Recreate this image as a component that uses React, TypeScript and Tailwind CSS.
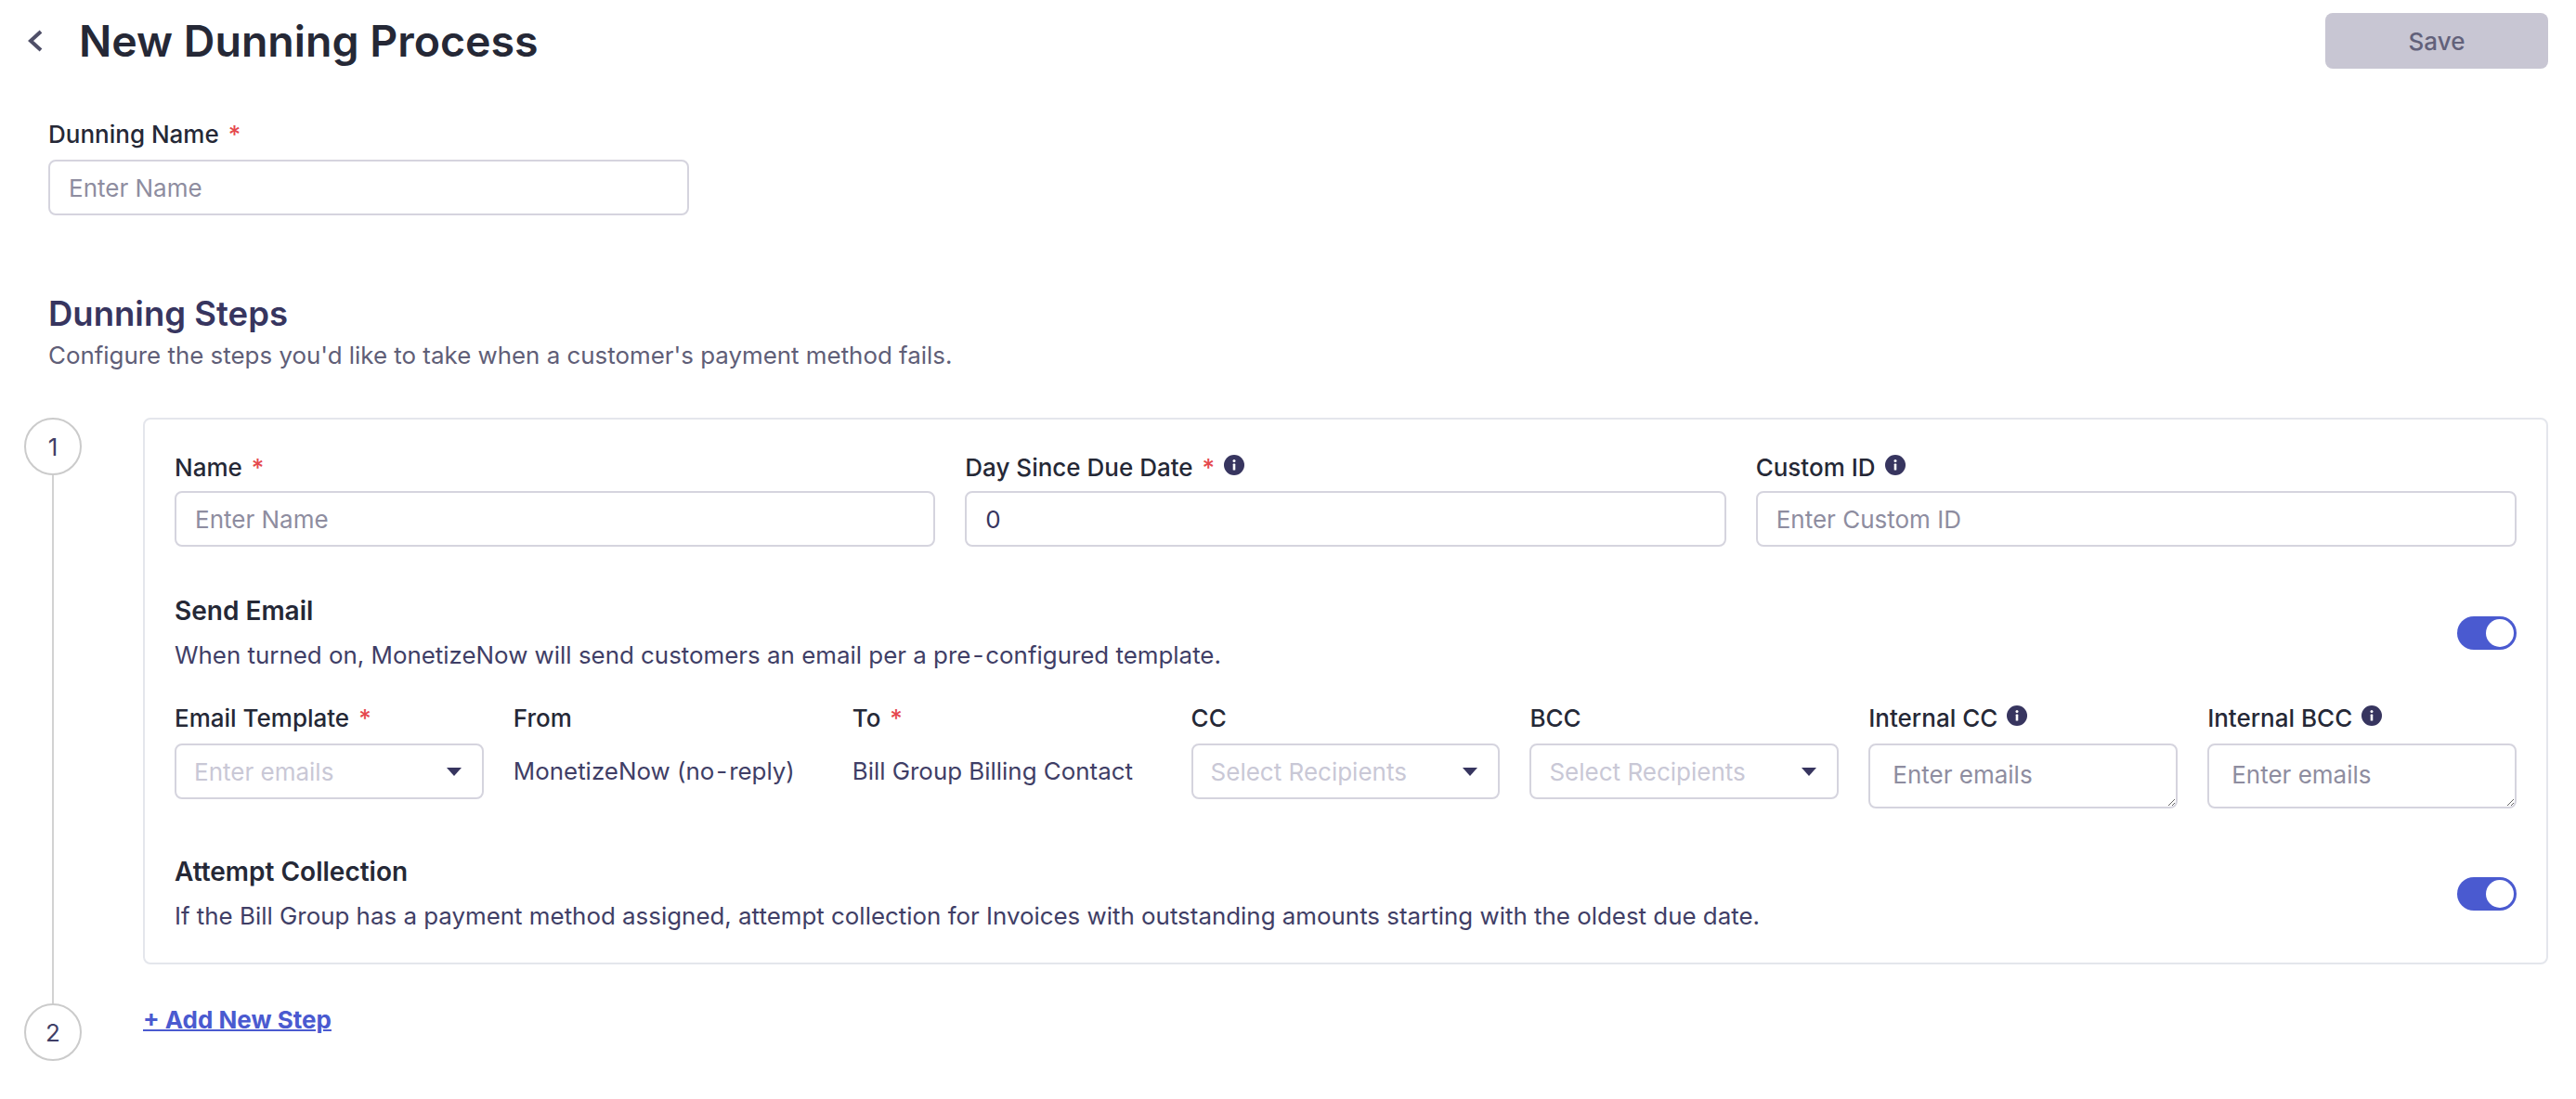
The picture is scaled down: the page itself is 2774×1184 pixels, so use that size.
function Required() {
  return <span className="ml-[10px] text-[#e5484d]">*</span>;
}

function Hyphen() {
  return <span className="mx-[2px]">-</span>;
}

function InfoIcon() {
  return (
    <svg viewBox="0 0 22 22" className="ml-[10px] mb-[6px] h-[22px] w-[22px] shrink-0">
      <circle cx="11" cy="11" r="11" fill="#37355f" />
      <circle cx="11" cy="6.6" r="1.5" fill="#ffffff" />
      <rect x="9.7" y="9.6" width="2.6" height="7" rx="0.6" fill="#ffffff" />
    </svg>
  );
}

function Label({ text, required, info }: { text: string; required?: boolean; info?: boolean }) {
  return (
    <label className="flex h-[28px] items-center text-[26px] font-medium leading-[28px] text-[#252836]">
      {text}
      {required && <Required />}
      {info && <InfoIcon />}
    </label>
  );
}

function TextInput({ placeholder, value }: { placeholder: string; value?: string }) {
  return (
    <input
      placeholder={placeholder}
      defaultValue={value}
      className="h-[60px] w-full rounded-lg border-2 border-[#d5d4de] bg-white px-[20px] text-[26px] text-[#37355f] outline-none placeholder:text-[#8e8da0]"
    />
  );
}

function SelectBox({ placeholder }: { placeholder: string }) {
  return (
    <div className="flex h-[60px] w-full items-center justify-between rounded-lg border-2 border-[#d5d4de] bg-white pl-[19px] pr-[22px] text-[26px] text-[#c9c8d6]">
      <span>{placeholder}</span>
      <svg viewBox="0 0 16 9" className="h-[9px] w-[16px]">
        <path d="M0 0H16L8 9Z" fill="#37355f" />
      </svg>
    </div>
  );
}

function TextArea({ placeholder }: { placeholder: string }) {
  return (
    <textarea
      placeholder={placeholder}
      className="block h-[70px] w-full rounded-lg border-2 border-[#d5d4de] bg-white px-[24px] pt-[16px] text-[26px] leading-[32px] text-[#37355f] outline-none placeholder:text-[#8e8da0]"
    />
  );
}

function Toggle() {
  return (
    <div className="flex h-[36px] w-[64px] shrink-0 items-center justify-end rounded-full bg-[#4a5ad0] pr-[3px]">
      <div className="h-[30px] w-[30px] rounded-full bg-white" />
    </div>
  );
}

function StepCircle({ n }: { n: number }) {
  return (
    <div className="flex h-[62px] w-[62px] shrink-0 items-center justify-center rounded-full border-2 border-[#cbcbcb] bg-white text-[26px] text-[#3f3e66]">
      {n}
    </div>
  );
}

function ToggleRow({ title, text }: { title: string; text: React.ReactNode }) {
  return (
    <div className="flex items-center justify-between">
      <div>
        <h3 className="text-[28px] font-semibold leading-[32px] text-[#252836]">{title}</h3>
        <p className="mt-[16px] text-[25.9px] leading-[32px] text-[#3f3e66]">{text}</p>
      </div>
      <Toggle />
    </div>
  );
}

export default function App() {
  return (
    <div className="h-[1184px] w-[2774px] overflow-hidden bg-white font-['Inter',sans-serif]">
      {/* header */}
      <div className="flex items-center justify-between pl-[30px] pr-[30px] pt-[14px]">
        <div className="flex items-center">
          <svg viewBox="0 0 16 24" className="h-[24px] w-[16px]" fill="none" stroke="#4f4f68" strokeWidth="4">
            <path d="M14 2L3 12L14 22" />
          </svg>
          <h1 className="ml-[39px] text-[46.5px] font-semibold leading-[60px] text-[#252836]">New Dunning Process</h1>
        </div>
        <button className="h-[60px] w-[240px] rounded-lg bg-[#c8c6d3] text-[26px] font-medium text-[#62617a]">
          Save
        </button>
      </div>

      <div className="pl-[52px] pt-[57px]">
        <Label text="Dunning Name" required />
        <div className="mt-[13px] w-[690px]">
          <TextInput placeholder="Enter Name" />
        </div>
        <h2 className="mt-[84px] text-[36.5px] font-semibold leading-[44px] text-[#37355f]">Dunning Steps</h2>
        <p className="mt-[7px] text-[25.9px] leading-[32px] text-[#5f5e77]">
          Configure the steps you'd like to take when a customer's payment method fails.
        </p>
      </div>

      {/* steps */}
      <div className="mt-[51px] flex pl-[26px] pr-[30px]">
        <div className="flex w-[62px] shrink-0 flex-col items-center">
          <StepCircle n={1} />
          <div className="w-[2px] flex-1 bg-[#d2d2d2]" />
          <StepCircle n={2} />
        </div>
        <div className="ml-[66px] flex-1">
          <div className="rounded-lg border-2 border-[#e4e6ec] px-[32px] pb-[34px] pt-[38px]">
            <div className="grid grid-cols-3 gap-x-[32px] gap-y-[11px]">
              <Label text="Name" required />
              <Label text="Day Since Due Date" required info />
              <Label text="Custom ID" info />
              <TextInput placeholder="Enter Name" />
              <TextInput placeholder="" value="0" />
              <TextInput placeholder="Enter Custom ID" />
            </div>

            <div className="mt-[53px]">
              <ToggleRow
                title="Send Email"
                text={<>When turned on, MonetizeNow will send customers an email per a pre<Hyphen />configured template.</>}
              />
            </div>

            <div className="mt-[38px] grid grid-cols-7 items-start gap-x-[32px] gap-y-[13px]">
              <Label text="Email Template" required />
              <Label text="From" />
              <Label text="To" required />
              <Label text="CC" />
              <Label text="BCC" />
              <Label text="Internal CC" info />
              <Label text="Internal BCC" info />
              <SelectBox placeholder="Enter emails" />
              <div className="flex h-[60px] items-center text-[25.9px] whitespace-nowrap text-[#3f3e66]">
                <span>MonetizeNow (no<Hyphen />reply)</span>
              </div>
              <div className="flex h-[60px] items-center text-[25.9px] whitespace-nowrap text-[#3f3e66]">Bill Group Billing Contact</div>
              <SelectBox placeholder="Select Recipients" />
              <SelectBox placeholder="Select Recipients" />
              <TextArea placeholder="Enter emails" />
              <TextArea placeholder="Enter emails" />
            </div>

            <div className="mt-[52px]">
              <ToggleRow
                title="Attempt Collection"
                text="If the Bill Group has a payment method assigned, attempt collection for Invoices with outstanding amounts starting with the oldest due date."
              />
            </div>
          </div>
          <a className="mt-[44px] mb-[28px] block text-[26px] font-bold leading-[32px] text-[#4a5ad0] underline decoration-2">+ Add New Step</a>
        </div>
      </div>
    </div>
  );
}
